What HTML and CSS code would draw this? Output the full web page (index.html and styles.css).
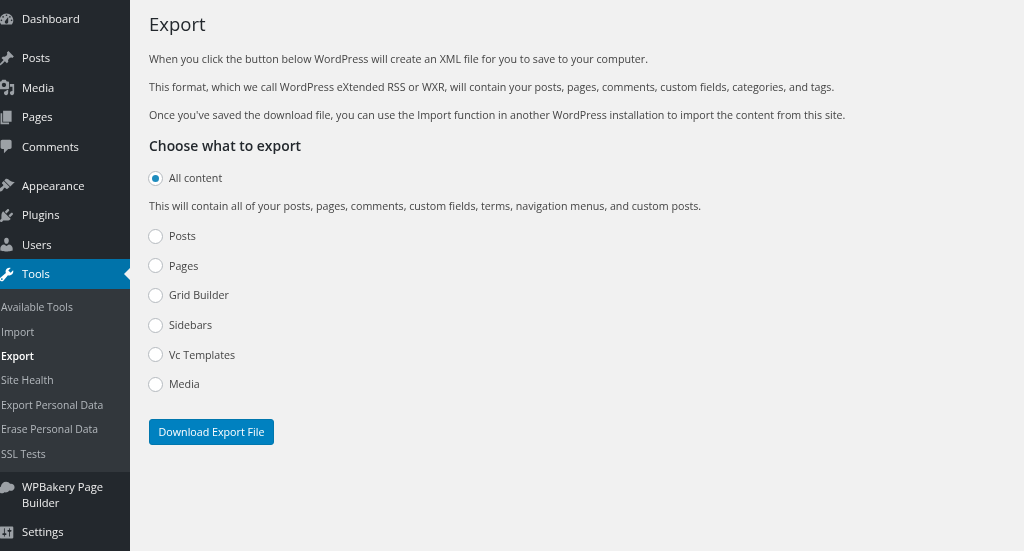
FILE: index.html
```html
<!DOCTYPE html>
<html lang="en">
<head>
<meta charset="utf-8">
<title>Export</title>
<link rel="stylesheet" href="styles.css">
</head>
<body>
<div class="app">
  <nav class="sidebar">
    <a class="item"><svg viewBox="0 0 20 20"><path d="M3.76 16h12.48c1.1-1.37 1.76-3.11 1.76-5 0-4.42-3.58-8-8-8s-8 3.58-8 8c0 1.89.66 3.63 1.76 5zM10 4c.55 0 1 .45 1 1s-.45 1-1 1-1-.45-1-1 .45-1 1-1zM6 6c.55 0 1 .45 1 1s-.45 1-1 1-1-.45-1-1 .45-1 1-1zm8 0c.55 0 1 .45 1 1s-.45 1-1 1-1-.45-1-1 .45-1 1-1zm-5.37 5.55L12 7v6c0 1.1-.9 2-2 2s-2-.9-2-2c0-.57.24-1.08.63-1.45zM4 10c.55 0 1 .45 1 1s-.45 1-1 1-1-.45-1-1 .45-1 1-1zm12 0c.55 0 1 .45 1 1s-.45 1-1 1-1-.45-1-1 .45-1 1-1z"/></svg><span>Dashboard</span></a>
    <div class="sep"></div>
    <a class="item"><svg viewBox="0 0 20 20"><path d="M10.44 3.02l1.82-1.82 6.36 6.35-1.83 1.82c-1.05-.68-2.48-.57-3.41.36l-.75.75c-.92.93-1.04 2.35-.35 3.41l-1.83 1.82-2.41-2.41-2.8 2.79c-.42.42-3.38 2.71-3.8 2.29s1.86-3.39 2.28-3.81l2.79-2.79L4.1 9.36l1.83-1.82c1.05.69 2.48.57 3.4-.36l.75-.75c.93-.92 1.05-2.35.36-3.41z"/></svg><span>Posts</span></a>
    <a class="item"><svg viewBox="0 0 20 20"><path d="M13 11V4c0-.55-.45-1-1-1h-1.67L9 1H5L3.67 3H2c-.55 0-1 .45-1 1v7c0 .55.45 1 1 1h10c.55 0 1-.45 1-1zM7 4.5c1.38 0 2.5 1.12 2.5 2.5S8.38 9.5 7 9.5 4.5 8.38 4.5 7 5.62 4.5 7 4.5zM14 6h5v10.5c0 1.38-1.12 2.5-2.5 2.5S14 17.88 14 16.5s1.12-2.5 2.5-2.5c.17 0 .34.02.5.05V9h-3V6zm-4 8.05V13h2v3.5c0 1.38-1.12 2.5-2.5 2.5S7 17.88 7 16.5 8.12 14 9.5 14c.17 0 .34.02.5.05z"/></svg><span>Media</span></a>
    <a class="item"><svg viewBox="0 0 20 20"><path d="M6 15V2h10v13H6zm-1 1h8v2H3V5h2v11z"/></svg><span>Pages</span></a>
    <a class="item"><svg viewBox="0 0 20 20"><path d="M5 2h9c1.1 0 2 .9 2 2v7c0 1.1-.9 2-2 2h-2l-5 5v-5H5c-1.1 0-2-.9-2-2V4c0-1.1.9-2 2-2z"/></svg><span>Comments</span></a>
    <div class="sep"></div>
    <a class="item"><svg viewBox="0 0 20 20"><path d="M14.48 11.06L7.41 3.99l1.5-1.5c.5-.56 2.3-.47 3.51.32 1.21.8 1.43 1.28 2.91 2.1 1.18.64 2.45 1.26 4.45.85zm-.71.71L6.7 4.7 4.93 6.47c-.39.39-.39 1.02 0 1.41l1.06 1.06c.39.39.39 1.03 0 1.42-.6.6-1.43 1.11-2.21 1.69-.35.26-.7.53-1.01.84C1.43 13.23.4 15.39 1.53 16.5c.87.87 2.45.59 3.45-.4.71-.71 1.13-1.72 1.62-2.4.21-.32.4-.63.62-.86.39-.39 1.03-.39 1.42 0l1.06 1.06c.39.39 1.02.39 1.41 0z"/></svg><span>Appearance</span></a>
    <a class="item"><svg viewBox="0 0 20 20"><path d="M13.11 4.36L9.87 7.6 8 5.73l3.24-3.24c.35-.34 1.05-.2 1.56.32.52.51.66 1.21.31 1.55zm-8 1.77l.91-1.12 9.01 9.01-1.19.84c-.71.71-2.63 1.16-3.82 1.16H6.14L4.9 17.26c-.59.59-1.54.59-2.12 0-.59-.58-.59-1.53 0-2.12l1.24-1.24v-3.88c0-1.13.4-3.19 1.09-3.89zm7.26 3.97l3.24-3.24c.34-.35 1.04-.21 1.55.31.52.51.66 1.21.31 1.55l-3.24 3.25z"/></svg><span>Plugins</span></a>
    <a class="item"><svg viewBox="0 0 20 20"><path d="M10 9.25c-2.27 0-2.73-3.44-2.73-3.44C7 4.02 7.82 2 9.97 2c2.16 0 2.98 2.02 2.71 3.81 0 0-.41 3.44-2.68 3.44zm0 2.57L12.72 10c2.39 0 4.52 2.33 4.52 4.53v2.49s-3.65 1.13-7.24 1.13c-3.65 0-7.24-1.13-7.24-1.13v-2.49c0-2.25 1.94-4.48 4.47-4.48z"/></svg><span>Users</span></a>
    <a class="item current"><svg viewBox="0 0 20 20"><path d="M16.68 9.77c-1.34 1.34-3.3 1.67-4.95.99l-5.41 6.52c-.99.99-2.59.99-3.58 0s-.99-2.59 0-3.57l6.52-5.42c-.68-1.65-.35-3.61.99-4.95 1.28-1.28 3.12-1.62 4.72-1.06l-2.89 2.89 2.82 2.82 2.86-2.87c.53 1.58.18 3.39-1.08 4.65zM3.81 16.21c.4.39 1.04.39 1.43 0 .4-.4.4-1.04 0-1.43-.39-.4-1.03-.4-1.43 0-.39.39-.39 1.03 0 1.43z"/></svg><span>Tools</span></a>
    <ul class="submenu">
      <li>Available Tools</li>
      <li>Import</li>
      <li class="active">Export</li>
      <li>Site Health</li>
      <li>Export Personal Data</li>
      <li>Erase Personal Data</li>
      <li>SSL Tests</li>
    </ul>
    <a class="item tall"><svg viewBox="0 0 20 20"><path d="M5 18C2.5 18 .8 16.3.8 14c0-1.8 1-3.200 2.500-3.800C3.700 7 6.200 4.500 9.500 4.500c2 0 3.700.9 4.700 2.300.4-.1.8-.1 1.100-.1 2.400 0 4.200 1.800 4.200 4.100 0 2.500-2 4.300-4.500 4.300-.6 0-1.200-.1-1.700-.3-.9 1.400-2.500 2.200-4.300 2.200-.5 0-1-.1-1.500-.2-.6.9-1.500 1.200-2.500 1.200z"/></svg><span>WPBakery Page Builder</span></a>
    <a class="item"><svg viewBox="0 0 20 20"><path d="M18 16V4c0-.55-.45-1-1-1H3c-.55 0-1 .45-1 1v12c0 .55.45 1 1 1h14c.55 0 1-.45 1-1zM8 11h1c.55 0 1 .45 1 1s-.45 1-1 1H8v1.500c0 .28-.22.5-.5.5s-.5-.22-.5-.5V13H6c-.55 0-1-.45-1-1s.45-1 1-1h1V5.500c0-.28.22-.5.5-.5s.5.22.5.5V11zm5-2h-1c-.55 0-1-.45-1-1s.45-1 1-1h1V5.500c0-.28.22-.5.5-.5s.5.22.5.5V7h1c.55 0 1 .45 1 1s-.45 1-1 1h-1v5.500c0 .28-.22.5-.5.5s-.5-.22-.5-.5V9z"/></svg><span>Settings</span></a>
  </nav>
  <main class="content">
    <h1>Export</h1>
    <p>When you click the button below WordPress will create an XML file for you to save to your computer.</p>
    <p>This format, which we call WordPress eXtended RSS or WXR, will contain your posts, pages, comments, custom fields, categories, and tags.</p>
    <p>Once you've saved the download file, you can use the Import function in another WordPress installation to import the content from this site.</p>
    <h2>Choose what to export</h2>
    <label class="choice"><span class="radio checked"></span>All content</label>
    <p class="desc">This will contain all of your posts, pages, comments, custom fields, terms, navigation menus, and custom posts.</p>
    <label class="choice"><span class="radio"></span>Posts</label>
    <label class="choice"><span class="radio"></span>Pages</label>
    <label class="choice"><span class="radio"></span>Grid Builder</label>
    <label class="choice"><span class="radio"></span>Sidebars</label>
    <label class="choice"><span class="radio"></span>Vc Templates</label>
    <label class="choice"><span class="radio"></span>Media</label>
    <button class="primary" type="button">Download Export File</button>
  </main>
</div>
</body>
</html>
```
FILE: styles.css
```css
* { box-sizing: border-box; }
html, body { margin: 0; height: 100%; overflow: hidden; }
body {
  background: #f1f1f1;
  color: #444;
  font-family: "Open Sans", "Noto Sans", sans-serif;
  font-size: 10.7px;
}
.app { display: flex; height: 551px; filter: blur(0.35px); }
.sidebar {
  width: 129.5px;
  flex: none;
  background: #23282d;
  padding-top: 4.3px;
  color: #eee;
  font-size: 11.2px;
}
.item {
  display: flex;
  align-items: center;
  gap: 7px;
  height: 29.5px;
  margin-left: -2px;
  position: relative;
}
.item svg { width: 17px; height: 17px; fill: #9ca1a6; flex: none; }
.item span { line-height: 15.5px; }
.sep { height: 9.5px; }
.current { background: #0073aa; color: #fff; }
.current svg { fill: #fff; }
.current::after {
  content: "";
  position: absolute;
  right: 0;
  top: 9px;
  border: 6px solid transparent;
  border-right-color: #f1f1f1;
  border-left-width: 0;
}
.tall { height: 45px; }
.tall svg { align-self: flex-start; margin-top: 6px; }
.submenu {
  list-style: none;
  margin: 0;
  padding: 6.5px 0 6px 1px;
  background: #32373c;
  color: #b4b9be;
  font-size: 10.4px;
  height: 183.7px;
}
.submenu li { height: 24.4px; line-height: 24.4px; }
.submenu .active { color: #fff; font-weight: 600; }
.content { flex: 1; padding-left: 19.5px; }
h1 {
  margin: 0;
  padding-top: 10px;
  height: 48px;
  font-size: 18.5px;
  line-height: 27px;
  font-weight: 400;
  color: #23282d;
}
p { margin: 0; height: 28px; line-height: 22px; }
h2 {
  margin: 0;
  height: 31.5px;
  padding-top: 4px;
  font-size: 13.9px;
  line-height: 20px;
  font-weight: 600;
  color: #23282d;
}
.choice {
  display: flex;
  align-items: center;
  gap: 6px;
  height: 29.7px;
}
.desc { height: 28px; line-height: 26px; }
.radio {
  width: 15px;
  height: 15px;
  margin-left: -1px;
  border: 1px solid #b4b9be;
  border-radius: 50%;
  background: #fff;
  display: flex;
  align-items: center;
  justify-content: center;
}
.radio.checked::before {
  content: "";
  width: 7px;
  height: 7px;
  border-radius: 50%;
  background: #1e8cbe;
}
.primary {
  display: block;
  margin-top: 19.5px;
  width: 125px;
  height: 26px;
  padding: 0;
  border: 1px solid #0077ae;
  border-radius: 3px;
  background: #0081c0;
  color: #fff;
  font: inherit;
}
```
